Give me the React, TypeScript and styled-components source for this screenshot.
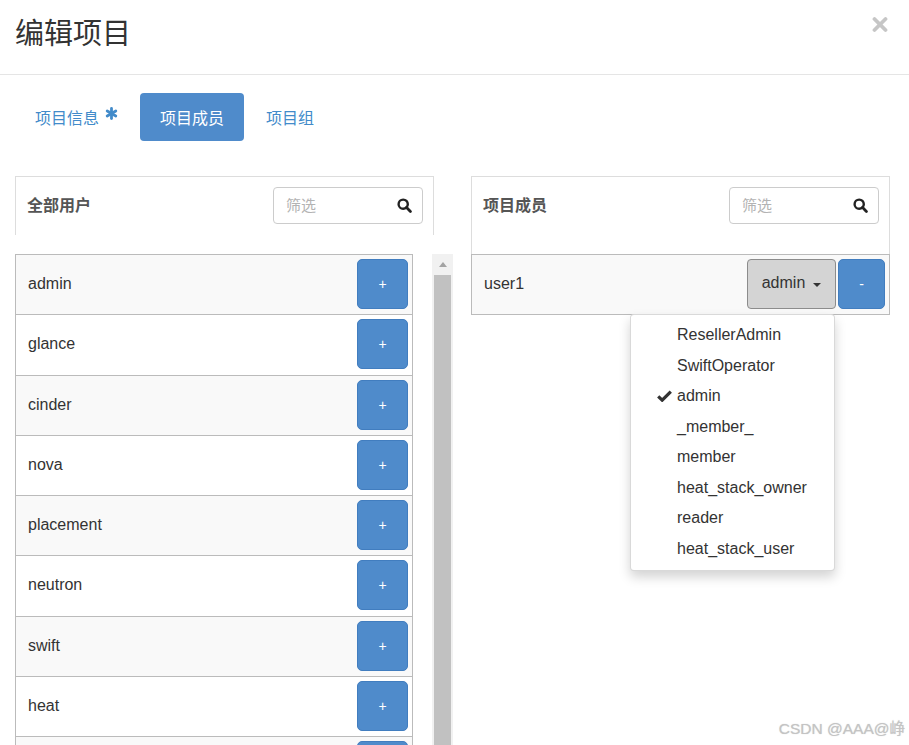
import React from "react";
import styled, { createGlobalStyle } from "styled-components";

const GlobalStyle = createGlobalStyle`
  *, *::before, *::after { box-sizing: border-box; }
  html, body { margin: 0; padding: 0; background: #fff; }
  body {
    font-family: "Liberation Sans", Arial, "Noto Sans CJK SC", sans-serif;
    color: #333;
  }
`;

const Page = styled.div`
  position: relative;
  width: 909px;
  height: 745px;
  overflow: hidden;
  background: #fff;
`;

const Header = styled.div`
  display: flex;
  justify-content: space-between;
  align-items: flex-start;
  height: 75px;
  padding: 14px 21px 0 15px;
  border-bottom: 1px solid #e5e5e5;
`;

const Title = styled.h4`
  margin: 0;
  font-size: 29px;
  line-height: 40px;
  font-weight: 400;
  color: #333;
`;

const CloseButton = styled.button`
  margin-top: 2px;
  padding: 0;
  border: none;
  background: transparent;
  width: 16px;
  height: 17px;
  display: flex;
  cursor: pointer;
`;

const Body = styled.div`
  padding: 18px 20px 0 15px;
`;

const Tabs = styled.div`
  display: flex;
  align-items: center;
`;

const Tab = styled.div<{ $active?: boolean }>`
  display: flex;
  align-items: center;
  height: 48px;
  padding: 0 20px;
  margin-right: 2px;
  border-radius: 4px;
  font-size: 16px;
  color: ${(p) => (p.$active ? "#fff" : "#428bca")};
  background: ${(p) => (p.$active ? "#4f8bcb" : "transparent")};
`;

const Asterisk = styled.span`
  display: inline-flex;
  margin-left: 6px;
  margin-top: -7px;
`;

const Columns = styled.div`
  display: grid;
  grid-template-columns: 438px 419px;
  column-gap: 18px;
  margin-top: 35px;
  align-items: start;
`;

const Column = styled.div`
  display: flex;
  flex-direction: column;
`;

const PanelHeader = styled.div<{ $h: number }>`
  width: 419px;
  height: ${(p) => p.$h}px;
  border: 1px solid #ddd;
  border-bottom: none;
  padding: 10px 10px 0 11px;
  display: flex;
  justify-content: space-between;
  align-items: flex-start;
`;

const PanelTitle = styled.div`
  font-size: 16px;
  font-weight: bold;
  line-height: 37px;
  color: #555;
`;

const FilterBox = styled.div`
  width: 150px;
  height: 37px;
  border: 1px solid #ccc;
  border-radius: 4px;
  display: flex;
  align-items: center;
  padding: 0 10px 0 12px;
  background: #fff;
`;

const FilterInput = styled.input`
  flex: 1;
  min-width: 0;
  border: none;
  outline: none;
  padding: 0;
  font-size: 15px;
  font-family: "Liberation Sans", Arial, "Noto Sans CJK SC", sans-serif;
  color: #333;
  background: transparent;
  &::placeholder { color: #b3b3b3; }
`;

const ListArea = styled.div`
  display: flex;
  align-items: stretch;
  margin-top: 19px;
  height: 520px;
`;

const List = styled.div<{ $w: number }>`
  width: ${(p) => p.$w}px;
  display: flex;
  flex-direction: column;
`;

const Row = styled.div<{ $striped?: boolean }>`
  flex: none;
  display: flex;
  align-items: center;
  justify-content: space-between;
  height: 61.25px;
  padding: 0 4px 1px 12px;
  border: 1px solid #bbb;
  background: ${(p) => (p.$striped ? "#f9f9f9" : "#fff")};
  font-size: 16px;
  color: #333;
  & + & { margin-top: -1px; }
`;

const RowActions = styled.div`
  display: flex;
  align-items: center;
  gap: 2px;
`;

const BlueButton = styled.button<{ $w: number }>`
  width: ${(p) => p.$w}px;
  height: 50px;
  border: 1px solid #417dbf;
  border-radius: 5px;
  background: #4f8bcb;
  color: #fff;
  font-size: 14px;
  font-family: "Liberation Sans", Arial, sans-serif;
  padding: 0;
  display: flex;
  align-items: center;
  justify-content: center;
`;

const DropWrap = styled.div`
  position: relative;
`;

const DropButton = styled.button`
  width: 89px;
  height: 50px;
  border: 1px solid #8c8c8c;
  border-radius: 4px;
  background: #d4d4d4;
  color: #333;
  font-size: 16px;
  font-family: "Liberation Sans", Arial, sans-serif;
  padding: 0 0 3px;
  display: flex;
  align-items: center;
  justify-content: center;
  gap: 8px;
`;

const Caret = styled.span`
  width: 0;
  height: 0;
  border-left: 4px solid transparent;
  border-right: 4px solid transparent;
  border-top: 4px solid #333;
  margin-top: 4px;
`;

const Menu = styled.ul`
  position: absolute;
  top: 55px;
  right: 1px;
  z-index: 10;
  width: 205px;
  margin: 0;
  padding: 5px 0 6px;
  list-style: none;
  background: #fff;
  border: 1px solid rgba(0, 0, 0, 0.15);
  border-radius: 4px;
  box-shadow: 0 6px 12px rgba(0, 0, 0, 0.175);
`;

const MenuItem = styled.li`
  position: relative;
  line-height: 30.5px;
  height: 30.5px;
  padding-left: 46px;
  font-size: 16px;
  color: #333;
  white-space: nowrap;
`;

const Check = styled.span`
  position: absolute;
  left: 26px;
  top: 9px;
  display: flex;
`;

const ScrollTrack = styled.div`
  width: 21px;
  margin-left: 19px;
  background: #f1f1f1;
  display: flex;
  flex-direction: column;
  align-items: center;
`;

const ScrollArrow = styled.div`
  height: 21px;
  width: 100%;
  display: flex;
  align-items: center;
  justify-content: center;
  &::after {
    content: "";
    width: 0;
    height: 0;
    border-left: 4.5px solid transparent;
    border-right: 4.5px solid transparent;
    border-bottom: 5px solid #a3a3a3;
  }
`;

const ScrollThumb = styled.div`
  flex: 1;
  width: 17px;
  background: #c1c1c1;
`;

const Watermark = styled.div`
  position: absolute;
  right: 4px;
  bottom: 7px;
  font-size: 15.5px;
  color: #c4c4c4;
  font-family: "Liberation Sans", Arial, "Noto Sans CJK SC", sans-serif;
  text-shadow: 0 0 1px rgba(120, 120, 120, 0.35);
`;

const SearchIcon = () => (
  <svg width="15" height="15" viewBox="0 0 15 15">
    <circle cx="6.2" cy="6.2" r="4.6" fill="none" stroke="#222" strokeWidth="2.4" />
    <line x1="9.6" y1="9.6" x2="13.4" y2="13.4" stroke="#222" strokeWidth="2.8" strokeLinecap="round" />
  </svg>
);

const CloseIcon = () => (
  <svg width="16" height="17" viewBox="0 0 16 17">
    <line x1="2.5" y1="3" x2="13.5" y2="14" stroke="#c6c6c6" strokeWidth="3.8" strokeLinecap="round" />
    <line x1="13.5" y1="3" x2="2.5" y2="14" stroke="#c6c6c6" strokeWidth="3.8" strokeLinecap="round" />
  </svg>
);

const AsteriskIcon = () => (
  <svg width="13" height="13" viewBox="0 0 13 13">
    <g stroke="#428bca" strokeWidth="2.8" strokeLinecap="round">
      <line x1="6.5" y1="1.5" x2="6.5" y2="11.5" />
      <line x1="2.2" y1="4" x2="10.8" y2="9" />
      <line x1="10.8" y1="4" x2="2.2" y2="9" />
    </g>
  </svg>
);

const CheckIcon = () => (
  <svg width="15" height="12" viewBox="0 0 15 12">
    <path d="M1.2 6.4 L5.2 10.2 L13.8 1.6" fill="none" stroke="#333" strokeWidth="3.2" strokeLinejoin="miter" />
  </svg>
);

const allUsers = ["admin", "glance", "cinder", "nova", "placement", "neutron", "swift", "heat"];
const roles = [
  "ResellerAdmin",
  "SwiftOperator",
  "admin",
  "_member_",
  "member",
  "heat_stack_owner",
  "reader",
  "heat_stack_user",
];

export default function App() {
  return (
    <>
      <GlobalStyle />
      <Page>
        <Header>
          <Title>编辑项目</Title>
          <CloseButton aria-label="close">
            <CloseIcon />
          </CloseButton>
        </Header>
        <Body>
          <Tabs>
            <Tab>
              项目信息
              <Asterisk>
                <AsteriskIcon />
              </Asterisk>
            </Tab>
            <Tab $active>项目成员</Tab>
            <Tab>项目组</Tab>
          </Tabs>
          <Columns>
            <Column>
              <PanelHeader $h={59}>
                <PanelTitle>全部用户</PanelTitle>
                <FilterBox>
                  <FilterInput placeholder="筛选" />
                  <SearchIcon />
                </FilterBox>
              </PanelHeader>
              <ListArea>
                <List $w={398}>
                  {allUsers.map((u, i) => (
                    <Row key={u} $striped={i % 2 === 0}>
                      <span>{u}</span>
                      <BlueButton $w={51}>+</BlueButton>
                    </Row>
                  ))}
                  <Row $striped>
                    <span />
                    <BlueButton $w={51} aria-label="add" />
                  </Row>
                </List>
                <ScrollTrack>
                  <ScrollArrow />
                  <ScrollThumb />
                </ScrollTrack>
              </ListArea>
            </Column>
            <Column>
              <PanelHeader $h={78}>
                <PanelTitle>项目成员</PanelTitle>
                <FilterBox>
                  <FilterInput placeholder="筛选" />
                  <SearchIcon />
                </FilterBox>
              </PanelHeader>
              <List $w={419}>
                <Row $striped>
                  <span>user1</span>
                  <RowActions>
                    <DropWrap>
                      <DropButton>
                        admin
                        <Caret />
                      </DropButton>
                      <Menu>
                        {roles.map((r) => (
                          <MenuItem key={r}>
                            {r === "admin" && (
                              <Check>
                                <CheckIcon />
                              </Check>
                            )}
                            {r}
                          </MenuItem>
                        ))}
                      </Menu>
                    </DropWrap>
                    <BlueButton $w={47}>-</BlueButton>
                  </RowActions>
                </Row>
              </List>
            </Column>
          </Columns>
        </Body>
        <Watermark>CSDN @AAA@峥</Watermark>
      </Page>
    </>
  );
}
